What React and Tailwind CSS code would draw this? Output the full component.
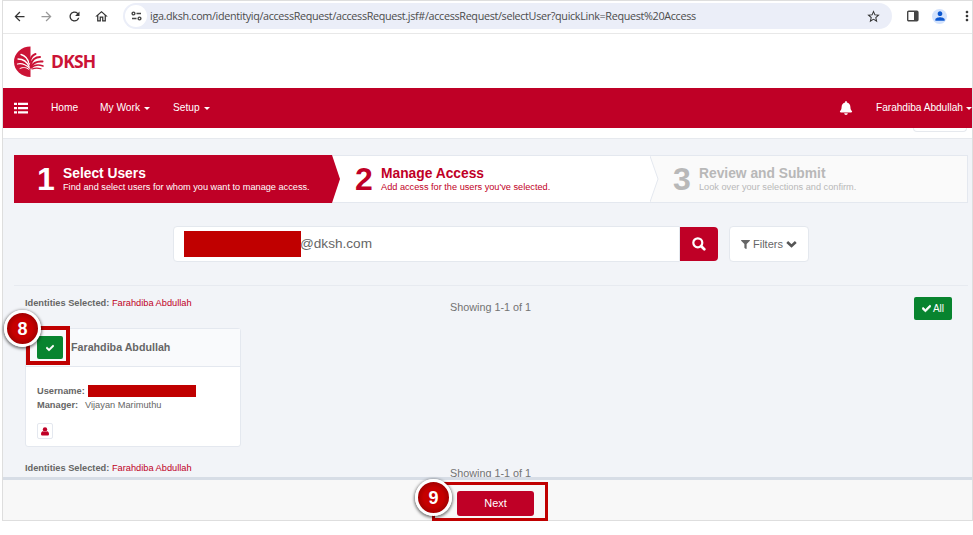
import React from "react";
import { MdArrowBack, MdArrowForward, MdRefresh, MdOutlineHome, MdStarOutline, MdMoreVert, MdPerson } from "react-icons/md";
import { FaCheck, FaFilter, FaBell } from "react-icons/fa";

function Caret() {
  return <span className="h-0 w-0 shrink-0 border-x-[3.5px] border-t-[3.5px] border-x-transparent border-t-white" />;
}

function Badge({ n, className }) {
  return (
    <div
      className={
        "absolute flex h-[37px] w-[37px] items-center justify-center rounded-full border-[3.5px] border-white bg-radial from-[#c60000] from-45% to-[#7c0000] text-[18px] font-bold leading-none text-white shadow-[0_1px_3px_1px_rgba(0,0,0,0.5)] " +
        className
      }
    >
      {n}
    </div>
  );
}

function Logo() {
  return (
    <svg width="32" height="32" viewBox="0 0 32 32" className="shrink-0">
      <path d="M17.500 0.500A16.500 15.200 0 0 0 17.500 30.900Z" fill="#cb1336" />
      <g fill="none" stroke="#fff" strokeWidth="1.300" strokeLinecap="round">
        <path d="M16.500 21C14 15.500 10 13 5 13" />
        <path d="M16.500 18.500C15 13 12 9.500 8 8.500" />
        <path d="M16.500 22C12 18 8 17 4.500 18" />
        <path d="M16 23.500C13 21 10 21 7 22.500" strokeWidth="1" />
      </g>
      <g fill="none" stroke="#cb1336" strokeWidth="2" strokeLinecap="round">
        <path d="M17 16C17.500 12 19.500 9 22.500 8" />
        <path d="M17.500 19C19 14 22 11 27 11" />
        <path d="M17.500 21C20 17 25 15 29.500 15.500" />
        <path d="M18 22C21 19 26 18.500 30 20" strokeWidth="1.600" />
        <path d="M19 23C22 21.800 25 21.800 28 22.800" strokeWidth="1.200" />
      </g>
    </svg>
  );
}

function ListIcon() {
  return (
    <svg width="14" height="12" viewBox="0 0 14 12" fill="#fff" className="shrink-0">
      <path d="M0 .7h3v2.200H0zM4 .7h10v2.200H4zM0 5h3v2.200H0zM4 5h10v2.200H4zM0 9.300h3v2.200H0zM4 9.300h10v2.200H4z" />
    </svg>
  );
}

function Step({ n, title, text, className }) {
  return (
    <div className={"flex h-full " + className}>
      <span className="w-[26px] pt-[9px] text-[32px] font-bold leading-[31px]">{n}</span>
      <div className="whitespace-nowrap pt-[11px]">
        <div className="text-[13.8px] font-bold leading-[15px]">{title}</div>
        <div className="text-[9.2px] leading-[12px]">{text}</div>
      </div>
    </div>
  );
}

function Selected() {
  return (
    <div className="whitespace-nowrap text-[9.25px] leading-[12px]">
      <b className="text-[#666]">Identities Selected:</b> <span className="text-[#bf0026]">Farahdiba Abdullah</span>
    </div>
  );
}

export default function App() {
  return (
    <div className="h-[535px] w-[973px] overflow-hidden bg-white pl-[2px] font-['Liberation_Sans',Arial,sans-serif]">
      <div className="relative h-[521px] w-[971px] border border-[#dedede]">
        <div className="flex h-[33px] items-center overflow-hidden border-b border-[#e8e8e8] pb-[2px] pl-[9px] text-[#333] [&>svg]:shrink-0">
          <MdArrowBack size={15} />
          <MdArrowForward size={15} className="ml-[12px] text-[#999]" />
          <MdRefresh size={15} className="ml-[13px]" />
          <MdOutlineHome size={15} className="ml-[12px]" />
          <div className="ml-[14px] flex h-[26px] w-[769px] shrink-0 items-center rounded-full bg-[#ebeef8] pl-[2px] pr-[11px]">
            <span className="flex h-[22px] w-[22px] items-center justify-center rounded-full bg-white">
              <svg width="11" height="10" viewBox="0 0 11 10" fill="none" stroke="#444" strokeWidth="1.400">
                <circle cx="2.500" cy="2.500" r="1.400" />
                <path d="M5.500 2.500H10M1 7.500h4.500" />
                <circle cx="8.500" cy="7.500" r="1.400" />
              </svg>
            </span>
            <span className="ml-[3px] whitespace-nowrap font-['Open_Sans',sans-serif] text-[10.8px] leading-[16px] tracking-[-0.335px] text-[#4c4c4c]">
              iga.dksh.com/identityiq/accessRequest/accessRequest.jsf#/accessRequest/selectUser?quickLink=Request%20Access
            </span>
            <MdStarOutline size={15} className="ml-auto" />
          </div>
          <svg width="12" height="12" viewBox="0 0 12 12" className="ml-[15px]">
            <rect x="0.700" y="1.200" width="10.200" height="9.600" rx="1" fill="none" stroke="#444" strokeWidth="1.400" />
            <path d="M7 1H11V11H7Z" fill="#444" />
          </svg>
          <span className="ml-[13px] flex h-[15px] w-[15px] shrink-0 items-center justify-center rounded-full bg-[#d3e3fd] text-[#0b57d0]">
            <MdPerson size={14} />
          </span>
          <MdMoreVert size={16} className="ml-[12px]" />
        </div>

        <div className="flex h-[54px] items-center pl-[10px] pt-[1px]">
          <Logo />
          <span className="ml-[6px] mt-[1px] font-['Open_Sans',sans-serif] text-[17.5px] font-bold leading-none tracking-[-0.8px] text-[#cb1336]">DKSH</span>
        </div>

        <div className="flex h-[40px] items-center bg-[#bf0026] pl-[11px] text-[10.2px] text-white">
          <ListIcon />
          <span className="ml-[23px] w-[49px]">Home</span>
          <span className="w-[44px] whitespace-nowrap">My Work</span>
          <Caret />
          <span className="ml-[23px] w-[31px]">Setup</span>
          <Caret />
          <FaBell size={14} className="ml-[629px] shrink-0" />
          <span className="ml-[23px] w-[90px] shrink-0 whitespace-nowrap tracking-[-0.05px]">Farahdiba Abdullah</span>
          <Caret />
        </div>
        <div className="flex h-[11px] justify-end border-b border-[#e6e9ee] bg-white pr-[5px]">
          <div className="h-[4px] w-[54px] rounded-b border border-t-0 border-[#e6e9ee]" />
        </div>

        <div className="relative h-[338px] overflow-hidden bg-[#f2f4f8] pt-[16px]">
          <div className="ml-[11px] flex h-[48px] w-[954px] bg-white shadow-[inset_0_1px_#e4e8ef,inset_0_-1px_#e4e8ef]">
            <div className="h-full w-[326px] shrink-0 bg-[#bf0026] text-white [clip-path:polygon(0_0,318px_0,326px_50%,318px_100%,0_100%)]">
              <Step n="1" title="Select Users" text="Find and select users for whom you want to manage access." className="pl-[23px]" />
            </div>
            <div className="h-full w-[310px] shrink-0 text-[#bf0026]">
              <Step n="2" title="Manage Access" text="Add access for the users you've selected." className="pl-[15px]" />
            </div>
            <div className="flex h-full grow border-y border-r border-[#e4e8ef] bg-[#fafafa] text-[#b8b8b8]">
              <svg width="9" height="46" viewBox="0 0 9 46" className="shrink-0">
                <path d="M0 0L8 23L0 46" fill="#fff" stroke="#e4e8ef" />
              </svg>
              <Step n="3" title="Review and Submit" text="Look over your selections and confirm." className="-mt-px pl-[14px]" />
            </div>
          </div>

          <div className="mt-[23px] flex h-[36px] pl-[170px] text-[#666]">
            <div className="flex h-full w-[507px] items-center rounded-l border border-[#e4e8ee] bg-white pl-[10px] text-[13.6px]">
              <span className="h-[26px] w-[117px] bg-[#c00000]" />
              <span className="-ml-px">@dksh.com</span>
            </div>
            <div className="my-[1px] flex w-[38px] items-center justify-center rounded-r bg-[#bf0026] text-white">
              <svg width="14" height="14" viewBox="0 0 14 14" fill="none" stroke="currentColor" strokeWidth="2.200">
                <circle cx="5.800" cy="5.800" r="4.500" />
                <path d="M9 9L12.300 12.300" strokeWidth="2.700" strokeLinecap="round" />
              </svg>
            </div>
            <div className="ml-[11px] flex w-[80px] items-center justify-center rounded border border-[#e4e8ee] bg-white text-[11px]">
              <FaFilter size={9} />
              <span className="mx-[3px]">Filters</span>
              <svg width="11" height="10" viewBox="0 0 11 10" fill="none" stroke="#555" strokeWidth="2.600">
                <path d="M1.200 3L5.500 7L9.800 3" />
              </svg>
            </div>
          </div>

          <div className="ml-[11px] mt-[23px] h-px w-[954px] bg-[#e7eaf0]" />

          <div className="flex h-[42px] pl-[22px]">
            <div className="w-[425px] pt-[11px]">
              <Selected />
            </div>
            <div className="w-[464px] pt-[15px] text-[10.8px] leading-[12px] text-[#737373]">Showing 1-1 of 1</div>
            <div className="mt-[11px] flex h-[23px] w-[38px] items-center justify-center gap-[2px] rounded-[2px] bg-[#08842f] text-[10px] text-white">
              <FaCheck size={9} stroke="currentColor" strokeWidth={40} />
              All
            </div>
          </div>

          <div className="ml-[22px] h-[119px] w-[216px] rounded-[3px] border border-[#e4e8ef] bg-white text-[9.25px] text-[#666]">
            <div className="flex h-[38px] items-center border-b border-[#e4e8ef] bg-[#f9fafc] pl-[11px]">
              <span className="flex h-[23px] w-[26px] items-center justify-center rounded-[2px] bg-[#08842f] text-white">
                <FaCheck size={8} stroke="currentColor" strokeWidth={40} />
              </span>
              <b className="ml-[8px] text-[10.7px]">Farahdiba Abdullah</b>
            </div>
            <div className="pl-[11px] pt-[18px]">
              <div className="flex h-[14px] items-center">
                <b className="w-[51px]">Username:</b>
                <span className="mb-[3px] h-[12px] w-[108px] bg-[#c00000]" />
              </div>
              <div className="flex h-[14px] items-center">
                <b className="w-[48px]">Manager:</b>
                <span>Vijayan Marimuthu</span>
              </div>
              <div className="mt-[10px] flex h-[16px] w-[16px] items-center justify-center rounded-[2px] border border-[#e4e8ef] text-[#bf0026]">
                <svg width="8" height="9" viewBox="0 0 8 9" fill="currentColor">
                  <circle cx="4" cy="2.500" r="2.200" />
                  <path d="M2 4.300C.6 4.600 0 5.600 0 7.300Q0 8.500 1.200 8.500H6.800Q8 8.500 8 7.300C8 5.600 7.400 4.600 6 4.300Q4 5.800 2 4.300Z" />
                </svg>
              </div>
            </div>
          </div>
          <div className="flex pl-[22px]">
            <div className="w-[425px] pt-[15px]">
              <Selected />
            </div>
            <div className="pt-[20px] text-[10.8px] leading-[12px] text-[#737373]">Showing 1-1 of 1</div>
          </div>
        </div>

        <div className="h-[43px] border-t-[3px] border-[#d7dde6] bg-[#f8f8f8] pl-[454px] pt-[11px]">
          <div className="flex h-[25px] w-[77px] items-center justify-center rounded-[3px] bg-[#bf0026] text-[10.9px] text-white">Next</div>
        </div>

        <div className="absolute left-[23px] top-[325px] h-[39px] w-[44px] border-[4px] border-[#c00000]" />
        <Badge n="8" className="left-[1px] top-[309px]" />
        <div className="absolute left-[429px] top-[481px] h-[39px] w-[116px] border-[3px] border-[#c00000]" />
        <Badge n="9" className="left-[412px] top-[478px]" />
      </div>
    </div>
  );
}
